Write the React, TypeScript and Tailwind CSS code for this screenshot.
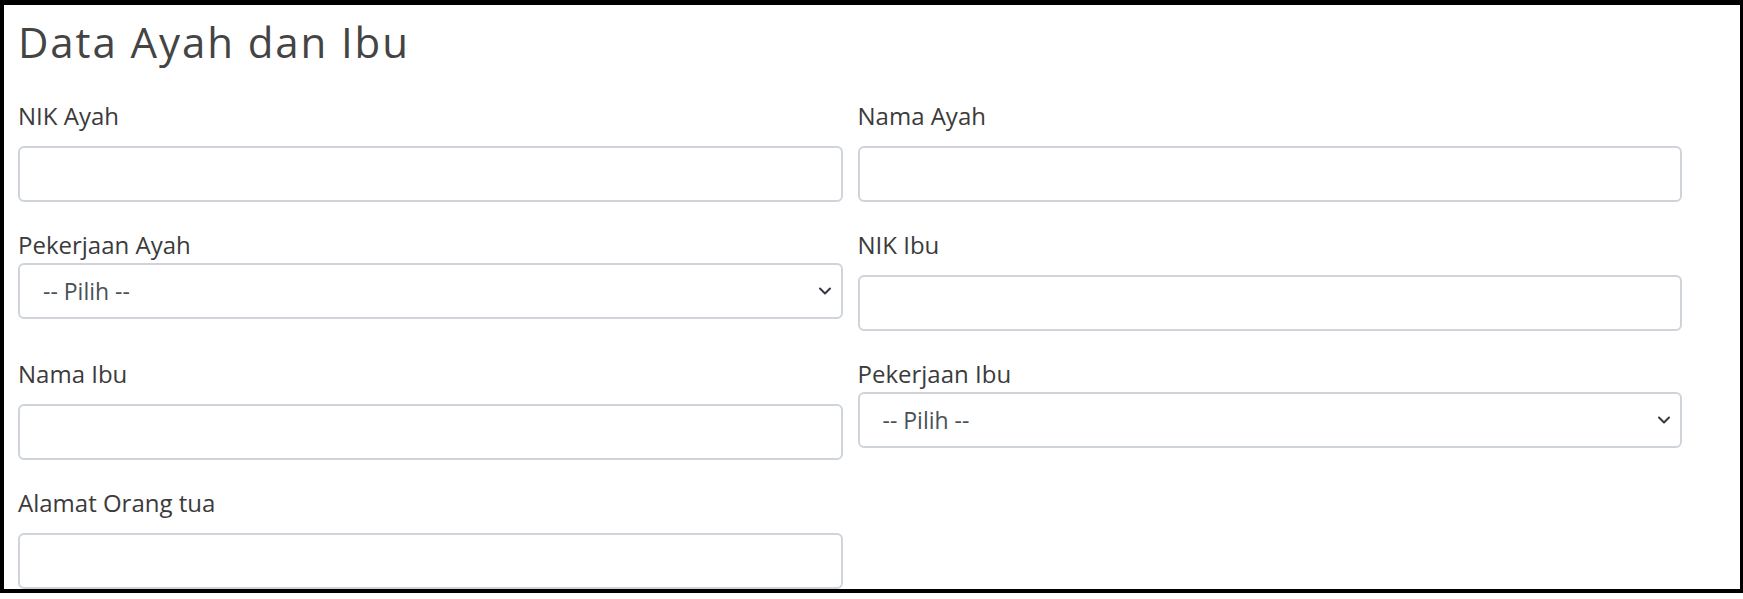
import { ReactNode } from 'react';

const Label = ({ children }: { children: ReactNode }) => (
  <label className="block h-[30px] text-[24px] leading-[30px] text-[#3b3b3b]">{children}</label>
);

const TextField = ({ label }: { label: string }) => (
  <div className="h-[129px]">
    <Label>{label}</Label>
    <input
      type="text"
      className="mt-[15px] block h-[56px] w-full rounded-[6px] border-2 border-[#ced4da] bg-white px-[23px] text-[23px] text-[#495057] outline-none"
    />
  </div>
);

const SelectField = ({ label }: { label: string }) => (
  <div className="h-[129px]">
    <Label>{label}</Label>
    <div className="relative mt-[3px]">
      <select className="block h-[56px] w-full appearance-none rounded-[6px] border-2 border-[#ced4da] bg-white pl-[23px] pr-[40px] text-[23px] text-[#495057] outline-none">
        <option>-- Pilih --</option>
      </select>
      {/* chevron */}
      <svg
        className="pointer-events-none absolute right-[12px] top-1/2 -translate-y-1/2"
        width="12"
        height="8"
        viewBox="0 0 12 8"
        fill="none"
      >
        <path d="M1 1.5l5 5 5-5" stroke="#343a40" strokeWidth="2" strokeLinecap="round" strokeLinejoin="round" />
      </svg>
    </div>
  </div>
);

export default function App() {
  return (
    <div className="bg-white" style={{ fontFamily: "'Open Sans', 'Noto Sans', sans-serif" }}>
      <div className="box-border h-[593px] overflow-hidden border-b-4 border-l-4 border-r-[3px] border-t-[5px] border-black bg-white pl-[14px] pt-[12px]">
        <h2 className="h-[50px] text-[42px] font-normal leading-[50px] tracking-[1.9px] text-[#444]">
          Data Ayah dan Ibu
        </h2>

        <div className="mt-[34px] grid w-[1664px] grid-cols-2 gap-x-[15px]">
          <div>
            <TextField label="NIK Ayah" />
            <SelectField label="Pekerjaan Ayah" />
            <TextField label="Nama Ibu" />
            <TextField label="Alamat Orang tua" />
          </div>
          <div>
            <TextField label="Nama Ayah" />
            <TextField label="NIK Ibu" />
            <SelectField label="Pekerjaan Ibu" />
          </div>
        </div>
      </div>
    </div>
  );
}
